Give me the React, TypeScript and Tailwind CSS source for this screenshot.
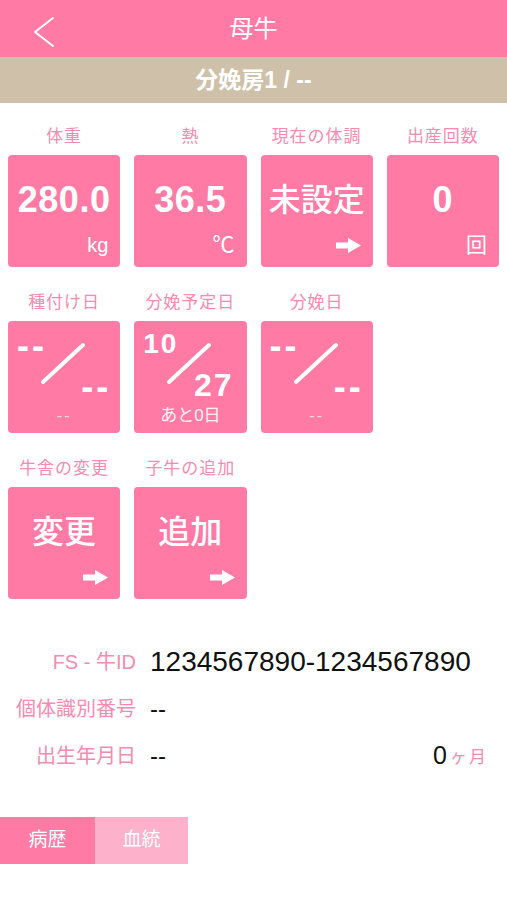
const font = { fontFamily: '"Liberation Sans", "Noto Sans CJK JP", sans-serif' };

function Arrow() {
  return (
    <svg width="25" height="15" viewBox="0 0 25 15" fill="white">
      <path d="M0 4.5h12V0l13 7.5L12 15v-4.5H0z" />
    </svg>
  );
}

function Slash() {
  return (
    <svg
      className="absolute left-0 top-0"
      width="112"
      height="112"
      viewBox="0 0 112 112"
    >
      <line
        x1="35"
        y1="61"
        x2="75"
        y2="24"
        stroke="white"
        strokeWidth="4"
        strokeLinecap="round"
      />
    </svg>
  );
}

function Cell({ label, children }: { label: string; children: React.ReactNode }) {
  return (
    <div className="flex flex-col items-center">
      <div className="h-5 leading-5 text-[17px] text-[#f58bb0] tracking-[1px] whitespace-nowrap">
        {label}
      </div>
      <div className="mt-2 h-[112px] w-full rounded-[4px] bg-[#ff7ba6] text-white">
        {children}
      </div>
    </div>
  );
}

function ValueTile({ value, unit, big }: { value: string; unit?: React.ReactNode; big?: boolean }) {
  return (
    <div className="flex h-full flex-col items-center pt-[25px] pb-[11px] pr-[10px]">
      <div
        className={
          big
            ? "h-10 leading-10 text-[32px] font-medium whitespace-nowrap pl-[10px]"
            : "h-10 leading-10 text-[36px] font-bold tracking-[0.5px] whitespace-nowrap pl-[10px]"
        }
      >
        {value}
      </div>
      <div className="mt-auto flex h-[22px] items-center self-end pr-[2px] text-[20px] leading-[22px]">
        {unit}
      </div>
    </div>
  );
}

function DateTile({ top, bottom, note, faint }: { top: string; bottom: string; note: string; faint?: boolean }) {
  return (
    <div className="relative flex h-full flex-col px-[9px] pt-[9px]">
      <Slash />
      <div
        className={
          faint
            ? "h-7 leading-7 text-[36px] font-bold tracking-[3px] self-start pt-[2px]"
            : "h-7 leading-7 text-[28px] font-bold tracking-[2px] self-start"
        }
      >
        {top}
      </div>
      <div
        className={
          faint
            ? "mt-[11px] h-8 leading-8 text-[36px] font-bold tracking-[3px] self-end pt-[2px]"
            : "mt-[11px] h-8 leading-8 text-[32px] font-bold tracking-[2px] self-end pr-[4px]"
        }
      >
        {bottom}
      </div>
      <div
        className={
          faint
            ? "mt-[5px] h-5 leading-5 text-center text-[16px] text-white/75 tracking-[2px]"
            : "mt-[5px] h-5 leading-5 text-center text-[17px] text-white/90"
        }
      >
        {note}
      </div>
    </div>
  );
}

function InfoRow({ label, children }: { label: string; children: React.ReactNode }) {
  return (
    <div className="flex h-[47px] items-center">
      <div className="w-[136px] shrink-0 text-right text-[20px] text-[#f58bb0]">{label}</div>
      <div className="ml-[14px] flex flex-1 items-center pr-[19px]">{children}</div>
    </div>
  );
}

export default function App() {
  return (
    <div className="min-h-[900px] w-[507px] bg-white" style={font}>
      <header className="relative flex h-[57px] items-center justify-center bg-[#ff7ba6]">
        <button className="absolute left-[28px] top-[11px] p-1">
          <svg width="24" height="34" viewBox="0 0 24 34" fill="none">
            <path d="M21 3 3 17l18 14" stroke="white" strokeWidth="2" strokeLinecap="round" strokeLinejoin="round" />
          </svg>
        </button>
        <h1 className="text-[24px] text-white">母牛</h1>
      </header>
      <div className="flex h-[46px] items-center justify-center bg-[#cfc1a9]">
        <span className="text-[23px] font-bold text-white">分娩房1 / --</span>
      </div>

      <div className="grid grid-cols-4 gap-x-[14px] px-2 pt-6">
        <Cell label="体重">
          <ValueTile value="280.0" unit="kg" />
        </Cell>
        <Cell label="熱">
          <ValueTile value="36.5" unit={<span className="text-[22px]">℃</span>} />
        </Cell>
        <Cell label="現在の体調">
          <ValueTile big value="未設定" unit={<Arrow />} />
        </Cell>
        <Cell label="出産回数">
          <ValueTile value="0" unit={<span className="text-[21px]">回</span>} />
        </Cell>
      </div>

      <div className="grid grid-cols-4 gap-x-[14px] px-2 pt-[26px]">
        <Cell label="種付け日">
          <DateTile top="--" bottom="--" note="--" faint />
        </Cell>
        <Cell label="分娩予定日">
          <DateTile top="10" bottom="27" note="あと0日" />
        </Cell>
        <Cell label="分娩日">
          <DateTile top="--" bottom="--" note="--" faint />
        </Cell>
      </div>

      <div className="grid grid-cols-4 gap-x-[14px] px-2 pt-[26px]">
        <Cell label="牛舎の変更">
          <ValueTile big value="変更" unit={<Arrow />} />
        </Cell>
        <Cell label="子牛の追加">
          <ValueTile big value="追加" unit={<Arrow />} />
        </Cell>
      </div>

      <div className="mt-[39px]">
        <InfoRow label="FS - 牛ID">
          <span className="text-[28px] text-[#111]">1234567890-1234567890</span>
        </InfoRow>
        <InfoRow label="個体識別番号">
          <span className="text-[24px] text-[#111]">--</span>
        </InfoRow>
        <InfoRow label="出生年月日">
          <span className="text-[24px] text-[#111]">--</span>
          <span className="ml-auto text-[25px] text-[#111]">0</span>
          <span className="ml-[3px] mt-1 text-[17px] tracking-[2px] text-[#f58bb0]">ヶ月</span>
        </InfoRow>
      </div>

      <div className="mt-[38px] flex">
        <button className="h-[47px] w-[95px] bg-[#ff7ba6] text-[19px] text-white">病歴</button>
        <button className="h-[47px] w-[93px] bg-[#fdb1ca] text-[19px] text-white">血統</button>
      </div>
    </div>
  );
}
